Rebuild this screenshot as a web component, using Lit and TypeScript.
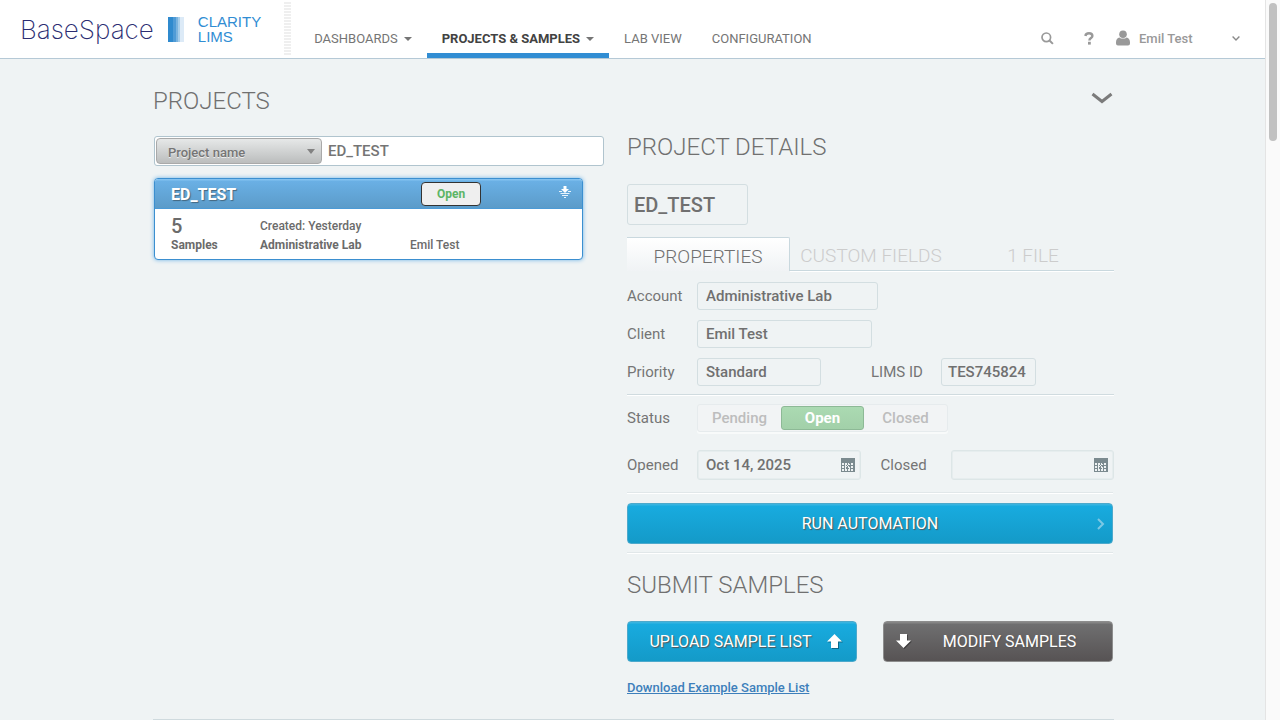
import { LitElement, html, css, svg } from "lit";
import { customElement, state } from "lit/decorators.js";

const calendarIcon = html`<svg class="cal" viewBox="0 0 14 14" width="14" height="14" aria-hidden="true">
  <rect x="0" y="0" width="14" height="14" fill="#7b8a8f"></rect>
  ${[0, 1, 2].map((r) => [0, 1, 2, 3].map((c) => svg`<rect x=${1 + c * 3} y=${5 + r * 3} width="2" height="2" fill="#eef2f3"></rect>`))}
  <path d="M4 7h1v1h-1zM6 7h1v1h-1zM5 8h1v1h-1zM7 8h1v1h-1zM4 10h1v1h-1zM8 10h1v1h-1z" fill="#eef2f3"></path>
  <path d="M5 9h1v1h-1zM8 8h1v1h-1zM8 5h1v1h-1z" fill="#7b8a8f"></path>
</svg>`;

@customElement("top-bar")
class TopBar extends LitElement {
  static styles = css`
    :host {
      display: flex;
      box-sizing: border-box;
      height: 59px;
      background: #fff;
      border-bottom: 1px solid #b5c9d6;
      font-family: Roboto, "Liberation Sans", sans-serif;
      font-size: 13px;
      padding-right: 25px;
    }
    .brand {
      display: flex;
      align-items: center;
      padding-left: 20px;
      gap: 14px;
    }
    .name {
      font-family: Inter, "Liberation Sans", sans-serif;
      font-weight: 200;
      font-size: 26px;
      color: #2b2d72;
    }
    .product {
      font-family: "Liberation Sans", sans-serif;
      font-size: 15px;
      line-height: 15px;
      color: #318dd3;
    }
    .product span {
      display: block;
    }
    .perf {
      width: 7px;
      margin: 2px 0 3px 23px;
      background: repeating-linear-gradient(#efefef 0 2px, #fff 2px 3px);
    }
    nav {
      display: flex;
      margin-left: 8px;
    }
    .item {
      display: flex;
      align-items: flex-end;
      gap: 6px;
      box-sizing: border-box;
      padding: 0 15px 7px;
      border-bottom: 5px solid transparent;
      line-height: 15px;
      color: #757575;
      text-decoration: none;
    }
    .item.on {
      font-weight: 700;
      color: #424242;
      border-bottom-color: #318dd3;
    }
    .caret {
      margin-bottom: 5px;
    }
    .tools {
      display: flex;
      margin-left: auto;
      align-items: flex-end;
      padding-bottom: 10px;
    }
    button {
      display: flex;
      align-items: center;
      height: 20px;
      border: 0;
      padding: 0;
      background: none;
      color: #999;
      font: 500 13px Roboto, "Liberation Sans", sans-serif;
    }
    .help {
      margin-left: 30px;
    }
    .user {
      margin-left: 22px;
      width: 124px;
      gap: 9px;
    }
    .user .chev {
      margin-left: auto;
    }
  `;
  render() {
    const caret = html`<svg class="caret" width="8" height="4" viewBox="0 0 8 4" aria-hidden="true"><path d="M0 0h8L4 4z" fill="#757575"></path></svg>`;
    return html`
      <div class="brand">
        <span class="name">BaseSpace</span>
        <svg width="16" height="25" viewBox="0 0 16 25" aria-hidden="true">
          <rect width="6" height="25" fill="#2f8ace"></rect>
          <rect x="5" width="3" height="25" fill="#4f9bd6"></rect>
          <rect x="8" width="2" height="25" fill="#79b3df"></rect>
          <rect x="10" width="2" height="25" fill="#a6cdea"></rect>
          <rect x="12" width="4" height="25" fill="#dceaf7"></rect>
        </svg>
        <span class="product"><span>CLARITY</span><span>LIMS</span></span>
      </div>
      <div class="perf"></div>
      <nav>
        <a class="item" href="#">DASHBOARDS ${caret}</a>
        <a class="item on" href="#">PROJECTS &amp; SAMPLES ${caret}</a>
        <a class="item" href="#">LAB VIEW</a>
        <a class="item" href="#">CONFIGURATION</a>
      </nav>
      <div class="tools">
        <button aria-label="Search">
          <svg width="13" height="13" viewBox="0 0 13 13"><circle cx="5.3" cy="5.3" r="4.3" fill="none" stroke="#999" stroke-width="1.7"></circle><path d="M8.5 8.5l3.4 3.4" stroke="#999" stroke-width="2"></path></svg>
        </button>
        <button class="help" aria-label="Help">
          <svg width="10" height="13" viewBox="0 0 10 13"><path d="M1.4 4C1.6 2.2 3 1.3 5 1.3s3.4 1 3.4 2.7c0 2.1-3 2.1-3 4.5" fill="none" stroke="#999" stroke-width="2.4"></path><rect x="4" y="9.8" width="2.8" height="2.8" fill="#999"></rect></svg>
        </button>
        <button class="user">
          <svg width="14" height="16" viewBox="0 0 14 16" aria-hidden="true"><circle cx="7" cy="4.2" r="3.8" fill="#999"></circle><path d="M0 12.2C0 9.4 1.5 7.6 3.4 7.4 5 9 9 9 10.6 7.4 12.5 7.6 14 9.4 14 12.2v1.3q0 1.9-2 1.9H2q-2 0-2-1.9z" fill="#999"></path></svg>
          <span>Emil Test</span>
          <svg class="chev" width="8" height="5" viewBox="0 0 8 5" aria-hidden="true"><path d="M.6.6L4 4 7.4.6" fill="none" stroke="#8a8a8a" stroke-width="1.4"></path></svg>
        </button>
      </div>
    `;
  }
}

@customElement("project-list")
class ProjectList extends LitElement {
  static styles = css`
    :host {
      display: block;
      padding: 0 0 0 1px;
      font-family: Roboto, "Liberation Sans", sans-serif;
      color: #6b6b6b;
    }
    .search {
      display: flex;
      align-items: center;
      box-sizing: border-box;
      height: 30px;
      padding: 1px;
      background: #fff;
      border: 1px solid #b0c4ce;
      border-radius: 3px;
    }
    .pick {
      position: relative;
      display: flex;
    }
    .pick svg {
      position: absolute;
      right: 7px;
      top: 11px;
      pointer-events: none;
    }
    select {
      appearance: none;
      width: 166px;
      height: 26px;
      padding: 2px 11px 0;
      border: 1px solid #a9a9a9;
      border-radius: 4px;
      background: linear-gradient(#e6e8e8, #bbbdbd);
      color: #757575;
      font: 500 13px Roboto, "Liberation Sans", sans-serif;
      text-shadow: 0 1px 0 #eee;
    }
    .term {
      flex: 1;
      min-width: 0;
      border: 0;
      padding: 0 6px;
      background: none;
      outline: none;
      color: #757575;
      font: 500 15px Roboto, "Liberation Sans", sans-serif;
    }
    .card {
      box-sizing: border-box;
      margin: 12px 21px 0 0;
      border: 1px solid #3b8fd0;
      border-radius: 4px;
      background: #fff;
      box-shadow: 0 0 4px #6db2e6;
      overflow: hidden;
    }
    .head {
      display: grid;
      grid-template-columns: 234px 60px 1fr;
      align-items: center;
      justify-items: start;
      gap: 0 16px;
      box-sizing: border-box;
      height: 30px;
      padding: 0 11px 0 16px;
      background: linear-gradient(#83c2f0 0 1px, #6ab0e5 2px, #5b9bc9 29px, #4b9ad6 29px);
    }
    .title {
      font-size: 16px;
      font-weight: 700;
      color: #fff;
      text-shadow: 1px 1px 1px #44677f;
    }
    .state {
      width: 60px;
      height: 24px;
      border: 1px solid #333;
      border-radius: 4px;
      background: #efefef;
      color: #5cb566;
      font: 700 12px Roboto, "Liberation Sans", sans-serif;
    }
    .head svg {
      justify-self: end;
      margin-bottom: 5px;
    }
    .body {
      display: grid;
      grid-template-columns: 89px 150px 1fr;
      align-items: center;
      box-sizing: border-box;
      height: 50px;
      padding: 8px 16px 4px;
      font-size: 12px;
      font-weight: 500;
      line-height: 19px;
    }
    .count {
      font-size: 20px;
    }
    .span2 {
      grid-column: span 2;
    }
    b {
      font-weight: 700;
    }
  `;
  render() {
    return html`
      <div class="search">
        <span class="pick">
          <select aria-label="Search by"><option>Project name</option></select>
          <svg width="8" height="5" viewBox="0 0 8 5" aria-hidden="true"><path d="M0 0h8L4 5z" fill="#828282"></path></svg>
        </span>
        <input class="term" aria-label="Search term" value="ED_TEST" />
      </div>
      <div class="card">
        <div class="head">
          <span class="title">ED_TEST</span>
          <button class="state">Open</button>
          <svg width="12" height="12" viewBox="0 0 12 12" aria-hidden="true">
            <path d="M4.500 0h3v3H10L6 7 2 3h2.500z" fill="#fff"></path>
            <path d="M0 5.500h3M9 5.500h3M1.500 7.500h9M3 9.500h6M5 11.500h2" stroke="#e7f3fc"></path>
          </svg>
        </div>
        <div class="body">
          <span class="count">5</span><span class="span2">Created: Yesterday</span>
          <b>Samples</b><b>Administrative Lab</b><span>Emil Test</span>
        </div>
      </div>
    `;
  }
}

@customElement("project-details")
class ProjectDetails extends LitElement {
  @state() private status = "Open";

  static styles = css`
    :host {
      display: block;
      font-family: Roboto, "Liberation Sans", sans-serif;
      font-size: 15px;
      color: #757575;
    }
    h2 {
      margin: 0;
      font-size: 24px;
      line-height: 30px;
      font-weight: 300;
      color: #707070;
    }
    input[type="text"] {
      box-sizing: border-box;
      height: 28px;
      padding: 0 8px;
      border: 1px solid #d3dee1;
      border-radius: 3px;
      background: none;
      outline: none;
      color: #707070;
      font: 500 15px Roboto, "Liberation Sans", sans-serif;
    }
    input.name[type="text"] {
      display: block;
      width: 121px;
      height: 41px;
      margin-top: 22px;
      padding: 0 6px;
      font-size: 20px;
    }
    .tabs {
      display: grid;
      grid-template-columns: 163px 162px 1fr;
      margin-top: 12px;
      height: 34px;
    }
    .tab {
      border: 0;
      border-bottom: 1px solid #c9d8de;
      box-shadow: 0 1px #fff;
      background: none;
      padding: 4px 0 0;
      color: #ccc;
      font: 300 19px Roboto, "Liberation Sans", sans-serif;
    }
    .tab.on {
      color: #707070;
      border: 1px solid #c9d8de;
      border-width: 1px 1px 0 0;
      border-radius: 0 2px 0 0;
      box-shadow: none;
      background: linear-gradient(#fff, #f0f3f5);
    }
    .row {
      display: flex;
      align-items: center;
      margin-top: 10px;
    }
    .tabs + .row {
      margin-top: 11px;
    }
    .rule + .row {
      margin-top: 9px;
    }
    .row > label,
    .row > .lbl {
      width: 70px;
      flex: none;
    }
    .w-l[type="text"] {
      width: 181px;
    }
    .w-m[type="text"] {
      width: 175px;
    }
    .w-s[type="text"] {
      width: 124px;
      margin-right: 50px;
    }
    .w-id[type="text"] {
      width: 95px;
      padding: 0 6px;
    }
    .rule {
      height: 1px;
      margin-top: 8px;
      background: #d0dbdf;
      box-shadow: 0 1px #fff;
    }
    .rule.soft {
      background: #e1e7e9;
    }
    .rule.wide {
      margin-top: 12px;
    }
    .seg {
      display: grid;
      grid-template-columns: 83px 83px 83px;
      box-sizing: border-box;
      height: 28px;
      padding: 1px 0;
      border: 1px solid #e6ebed;
      border-radius: 3px;
      background: #f2f4f5;
      box-shadow: 0 2px #f8fafa;
    }
    .seg label {
      display: flex;
      align-items: center;
      justify-content: center;
      border: 1px solid transparent;
      font-weight: 500;
      color: #bdbdbd;
    }
    .seg label.on {
      border-color: #8db996;
      border-radius: 3px;
      color: #fff;
      font-weight: 700;
      background: linear-gradient(#abdab2, #a2d0a9);
    }
    .seg input {
      position: absolute;
      opacity: 0;
      pointer-events: none;
    }
    .row.dates {
      margin-top: 18px;
    }
    .date {
      display: flex;
      flex: 1 1 0;
      min-width: 0;
      align-items: center;
      box-sizing: border-box;
      height: 30px;
      padding-right: 5px;
      border: 1px solid #dde6e7;
      border-radius: 3px;
      box-shadow: inset 0 0 0 1px #e6edee;
    }
    .date + label {
      margin-left: 20px;
    }
    .date input[type="text"] {
      flex: 1;
      min-width: 0;
      border: 0;
    }
    .big {
      display: flex;
      align-items: center;
      justify-content: center;
      box-sizing: border-box;
      height: 41px;
      padding: 0 12px 0 6px;
      border: 1px solid #4ca9cc;
      border-radius: 4px;
      background: linear-gradient(#38b4e0 0 1px, #18abdf 2px, #149ac8);
      color: #fff;
      font: 400 16px Roboto, "Liberation Sans", sans-serif;
      text-shadow: 1px 1px 1px #555;
    }
    .big.run {
      width: 100%;
      margin-top: 10px;
      padding: 0 7px 0 15px;
    }
    .big span {
      flex: 1;
    }
    .submit {
      margin-top: 17px;
    }
    .pair {
      display: grid;
      grid-template-columns: 1fr 1fr;
      gap: 26px;
      margin-top: 21px;
    }
    .big.dark {
      padding: 0 6px 0 12px;
      border-color: #8d8d8d;
      background: linear-gradient(#858585 0 1px, #6f6f70 2px, #575354);
    }
    .inset {
      padding-right: 1px;
    }
    a {
      display: block;
      width: fit-content;
      margin-top: 18px;
      font-size: 13px;
      line-height: 16px;
      font-weight: 500;
      color: #3d7fbb;
    }
  `;

  render() {
    const arrow = (d: string) => html`<svg width="17" height="17" viewBox="0 0 17 17" aria-hidden="true"><path d=${d} transform="translate(1 1)" fill="#000" opacity=".35"></path><path d=${d} fill="#fff"></path></svg>`;
    return html`
      <h2>PROJECT DETAILS</h2>
      <input class="name" type="text" aria-label="Name" value="ED_TEST" />
      <div class="tabs">
        <button class="tab on">PROPERTIES</button>
        <button class="tab">CUSTOM FIELDS</button>
        <button class="tab">1 FILE</button>
      </div>
      <div class="row"><label for="acc">Account</label><input id="acc" class="w-l" type="text" value="Administrative Lab" /></div>
      <div class="row"><label for="cli">Client</label><input id="cli" class="w-m" type="text" value="Emil Test" /></div>
      <div class="row">
        <label for="pri">Priority</label><input id="pri" class="w-s" type="text" value="Standard" />
        <label for="lid">LIMS ID</label><input id="lid" class="w-id" type="text" value="TES745824" />
      </div>
      <div class="rule"></div>
      <div class="row">
        <span class="lbl" id="st">Status</span>
        <div class="seg" role="radiogroup" aria-labelledby="st">
          ${["Pending", "Open", "Closed"].map(
            (s) => html`<label class=${s === this.status ? "on" : ""}><input type="radio" name="status" .checked=${s === this.status} @change=${() => (this.status = s)} />${s}</label>`
          )}
        </div>
      </div>
      <div class="row dates">
        <label for="opn">Opened</label><span class="date"><input id="opn" type="text" value="Oct 14, 2025" />${calendarIcon}</span>
        <label for="cls">Closed</label><span class="date"><input id="cls" type="text" />${calendarIcon}</span>
      </div>
      <div class="inset">
        <div class="rule soft wide"></div>
        <button class="big run"><span>RUN AUTOMATION</span><svg width="8" height="12" viewBox="0 0 8 12" aria-hidden="true"><path d="M1 1l5 5-5 5" fill="none" stroke="#7cc8e4" stroke-width="2"></path></svg></button>
        <div class="rule soft"></div>
        <h2 class="submit">SUBMIT SAMPLES</h2>
        <div class="pair">
          <button class="big"><span>UPLOAD SAMPLE LIST</span>${arrow("M7.500 1L15 8.500H11V15H4V8.500H0z")}</button>
          <button class="big dark">${arrow("M4 1h7v6.500h4L7.500 15 0 7.500h4z")}<span>MODIFY SAMPLES</span></button>
        </div>
        <a href="#">Download Example Sample List</a>
      </div>
    `;
  }
}

@customElement("app-root")
class AppRoot extends LitElement {
  static styles = css`
    :host {
      display: grid;
      grid-template-columns: minmax(0, 1fr) 15px;
      height: 100vh;
      overflow: hidden;
      background: #eff3f4;
      font-family: Roboto, "Liberation Sans", sans-serif;
    }
    .page {
      overflow: hidden;
    }
    main {
      max-width: 961px;
      margin: 0 auto;
      padding-left: 2px;
    }
    .heading {
      display: flex;
      justify-content: space-between;
      align-items: center;
      padding: 26px 1px 0 0;
    }
    h1 {
      margin: 0;
      font-size: 24px;
      line-height: 32px;
      font-weight: 300;
      color: #707070;
    }
    .fold {
      display: flex;
      padding: 0;
      border: 0;
      margin-bottom: 5px;
      background: none;
    }
    .cols {
      display: grid;
      grid-template-columns: 451px minmax(0, 1fr);
      gap: 23px;
      padding-top: 15px;
    }
    project-list {
      margin-top: 4px;
    }
    .end {
      height: 1px;
      margin-top: 23px;
      background: #cfdade;
    }
    .track {
      box-sizing: border-box;
      padding: 3px 3px 0;
      background: #fafafa;
      border-left: 1px solid #e4e4e4;
    }
    .thumb {
      height: 138px;
      width: 8px;
      border-radius: 4px;
      background: #c1c1c1;
    }
  `;
  render() {
    return html`
      <div class="page">
        <top-bar></top-bar>
        <main>
          <div class="heading">
            <h1>PROJECTS</h1>
            <button class="fold" aria-label="Collapse"><svg width="22" height="13" viewBox="0 0 22 13"><path d="M1.500 2L11 9.500 20.500 2" fill="none" stroke="#7b7b7b" stroke-width="3"></path></svg></button>
          </div>
          <div class="cols">
            <project-list></project-list>
            <project-details></project-details>
          </div>
          <div class="end"></div>
        </main>
      </div>
      <div class="track"><div class="thumb"></div></div>
    `;
  }
}
